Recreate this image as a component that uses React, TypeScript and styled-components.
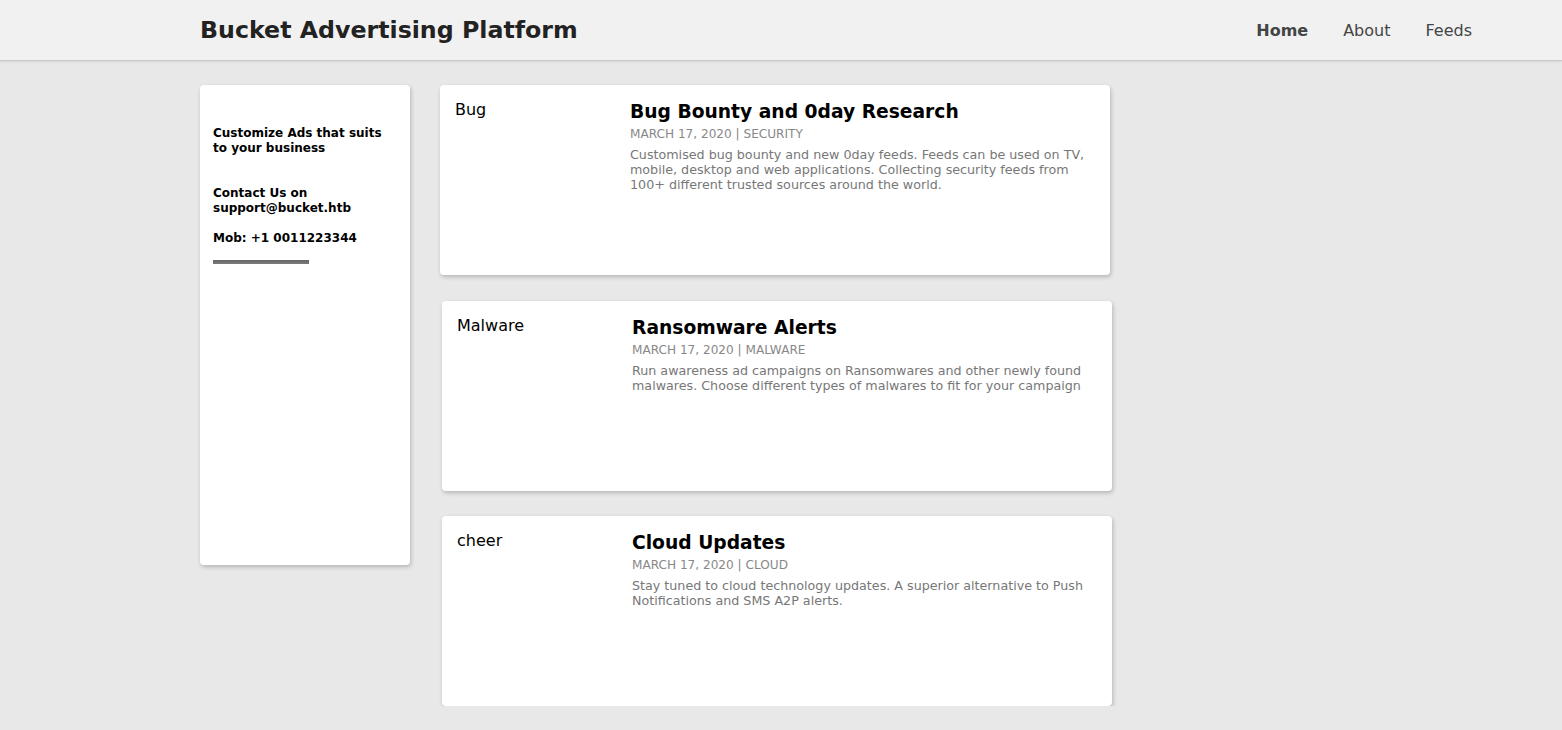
import React from "react";
import styled, { createGlobalStyle } from "styled-components";

const Global = createGlobalStyle`
  html, body { margin: 0; padding: 0; }
  body {
    background: #e8e8e8;
    font-family: "DejaVu Sans", "Liberation Sans", sans-serif;
    color: #000;
  }
`;

const Header = styled.header`
  height: 61px;
  background: #f1f1f1;
  border-bottom: 1px solid #c8c8c8;
  box-shadow: 0 1px 2px rgba(0,0,0,0.08);
  display: flex;
  align-items: center;
  justify-content: space-between;
  padding: 0 90px 0 200px;
  box-sizing: border-box;
`;

const Brand = styled.div`
  font-size: 23.7px;
  font-weight: bold;
  color: #222;
`;

const Nav = styled.nav`
  display: flex;
  gap: 35px;
`;

const NavLink = styled.a<{ $active?: boolean }>`
  font-size: 16px;
  color: #444;
  font-weight: ${p => (p.$active ? "bold" : "normal")};
  text-decoration: none;
`;

const Main = styled.main`
  display: flex;
  align-items: flex-start;
  gap: 30px;
  padding: 24px 0 0 200px;
`;

const Sidebar = styled.aside`
  width: 210px;
  height: 480px;
  background: #fff;
  border-radius: 4px;
  box-shadow: 1px 2px 4px rgba(0,0,0,0.22);
  padding: 41px 13px 0;
  box-sizing: border-box;
`;

const SideText = styled.p<{ $gap?: number }>`
  font-size: 12px;
  font-weight: bold;
  line-height: 15px;
  margin: 0 0 ${p => p.$gap ?? 0}px;
`;

const Rule = styled.div`
  width: 96px;
  height: 0;
  border-top: 2px solid #6a6a6a;
  border-bottom: 2px solid #777;
  margin-top: 14px;
`;

const Feed = styled.section`
  display: flex;
  flex-direction: column;
`;

const Card = styled.article<{ $shift?: number; $top?: number }>`
  width: 670px;
  height: 190px;
  background: #fff;
  border-radius: 4px;
  box-shadow: 1px 2px 4px rgba(0,0,0,0.22);
  display: flex;
  padding: 15px 15px 0;
  box-sizing: border-box;
  margin-left: ${p => p.$shift ?? 0}px;
  margin-top: ${p => p.$top ?? 0}px;
`;

const Thumb = styled.div`
  width: 175px;
  flex-shrink: 0;
  font-size: 16px;
  color: #000;
  line-height: 19px;
`;

const Body = styled.div`
  flex: 1;
`;

const Title = styled.h2`
  font-size: 18.7px;
  font-weight: bold;
  margin: 0;
  line-height: 24px;
  color: #000;
`;

const Meta = styled.div`
  font-size: 12.1px;
  color: #888;
  margin-top: 3px;
  line-height: 14px;
  text-transform: uppercase;
`;

const Desc = styled.p`
  font-size: 12.7px;
  color: #777;
  margin: 6px 0 0;
  line-height: 15px;
`;

const feeds = [
  {
    alt: "Bug",
    title: "Bug Bounty and 0day Research",
    meta: "March 17, 2020 | Security",
    desc: "Customised bug bounty and new 0day feeds. Feeds can be used on TV, mobile, desktop and web applications. Collecting security feeds from 100+ different trusted sources around the world.",
    shift: 0,
    top: 0,
  },
  {
    alt: "Malware",
    title: "Ransomware Alerts",
    meta: "March 17, 2020 | Malware",
    desc: "Run awareness ad campaigns on Ransomwares and other newly found malwares. Choose different types of malwares to fit for your campaign",
    shift: 2,
    top: 26,
  },
  {
    alt: "cheer",
    title: "Cloud Updates",
    meta: "March 17, 2020 | Cloud",
    desc: "Stay tuned to cloud technology updates. A superior alternative to Push Notifications and SMS A2P alerts.",
    shift: 2,
    top: 25,
  },
];

export default function App() {
  return (
    <>
      <Global />
      <Header>
        <Brand>Bucket Advertising Platform</Brand>
        <Nav>
          <NavLink $active>Home</NavLink>
          <NavLink>About</NavLink>
          <NavLink>Feeds</NavLink>
        </Nav>
      </Header>
      <Main>
        <Sidebar>
          <SideText $gap={30}>Customize Ads that suits to your business</SideText>
          <SideText $gap={15}>Contact Us on support@bucket.htb</SideText>
          <SideText>Mob: +1 0011223344</SideText>
          <Rule />
        </Sidebar>
        <Feed>
          {feeds.map(f => (
            <Card key={f.title} $shift={f.shift} $top={f.top}>
              <Thumb>{f.alt}</Thumb>
              <Body>
                <Title>{f.title}</Title>
                <Meta>{f.meta}</Meta>
                <Desc>{f.desc}</Desc>
              </Body>
            </Card>
          ))}
        </Feed>
      </Main>
    </>
  );
}
